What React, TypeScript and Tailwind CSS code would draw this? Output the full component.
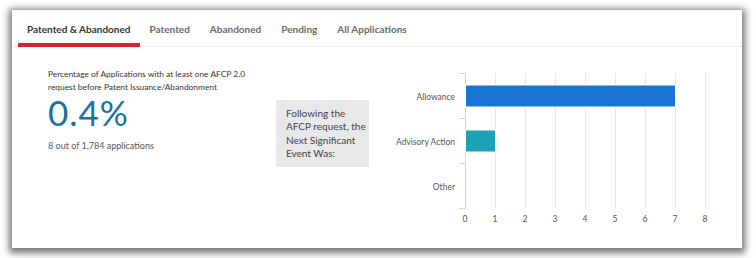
const TABS = ['Patented & Abandoned', 'Patented', 'Abandoned', 'Pending', 'All Applications']

const BARS = [
  { label: 'Allowance', value: 7, color: '#1976d2' },
  { label: 'Advisory Action', value: 1, color: '#1aa1b4' },
  { label: 'Other', value: 0, color: '#1976d2' },
]

// chart geometry (svg px)
const AXIS_X = 85
const TOP = 13
const ROW = 45
const UNIT = 30

function BarChart() {
  const bottom = TOP + ROW * BARS.length
  return (
    <svg width="340" height="170" className="block" style={{ fontFamily: 'Lato, sans-serif' }}>
      {/* gridlines */}
      {Array.from({ length: 9 }, (_, i) => (
        <line key={i} x1={AXIS_X + i * UNIT + 0.5} x2={AXIS_X + i * UNIT + 0.5} y1={TOP} y2={bottom} stroke="#e6e6e6" />
      ))}
      {/* axis + ticks */}
      <line x1={AXIS_X + 0.5} x2={AXIS_X + 0.5} y1={TOP} y2={bottom} stroke="#ccd6eb" />
      {Array.from({ length: BARS.length + 1 }, (_, i) => (
        <line key={i} x1={AXIS_X - 6} x2={AXIS_X} y1={TOP + i * ROW + 0.5} y2={TOP + i * ROW + 0.5} stroke="#ccd6eb" />
      ))}
      {BARS.map((b, i) => (
        <g key={b.label}>
          {b.value > 0 && (
            <rect x={AXIS_X + 0.5} y={TOP + i * ROW + 12} width={b.value * UNIT} height={22} fill={b.color} stroke="#fff" strokeWidth="1" />
          )}
          <text x={AXIS_X - 10} y={TOP + i * ROW + 26.5} textAnchor="end" fontSize="8.5" fill="#555">
            {b.label}
          </text>
        </g>
      ))}
      {Array.from({ length: 9 }, (_, i) => (
        <text key={i} x={AXIS_X + i * UNIT} y={162} textAnchor="middle" fontSize="8.5" fill="#555">
          {i}
        </text>
      ))}
    </svg>
  )
}

export default function App() {
  return (
    <div className="w-[756px] h-[258px] bg-white pt-[10px] pl-[12px] font-['Lato',sans-serif]">
      <div className="w-[730px] h-[238px] bg-white shadow-[0_2px_7px_3px_rgba(0,0,0,0.55)]">
        {/* Tabs */}
        <div className="flex h-[37px] pl-[6px] border-b border-[#efefef]">
          {TABS.map((tab, i) => (
            <div
              key={tab}
              className={
                i === 0
                  ? 'px-[9px] pt-[12px] h-[37px] -mb-px border-b-4 border-[#e4202a] text-[10px] font-bold text-[#333]'
                  : 'px-[10px] pt-[12px] text-[10px] font-bold text-[#6b6b6b]'
              }
            >
              {tab}
            </div>
          ))}
        </div>

        {/* Content */}
        <div className="flex items-start">
          <div className="ml-[36px] w-[228px] pt-[21px]">
            <p className="text-[8.4px] leading-[13px] text-[#333]">
              Percentage of Applications with at least one AFCP 2.0
              <br />
              request before Patent Issuance/Abandonment
            </p>
            <div className="mt-[1px] text-[35px] leading-[34px] tracking-[1px] font-normal text-[#1b6fa3]">0.4%</div>
            <p className="mt-[10px] text-[9px] leading-[13px] text-[#555]">
              <span className="text-[#2f6fb0]">8</span> out of 1,784 applications
            </p>
          </div>

          <div className="mt-[53px] w-[93px] h-[67px] bg-[#e8e8e8] pl-[10px] pt-[7px] text-[10px] leading-[13.3px] text-[#444]">
            Following the
            <br />
            AFCP request, the
            <br />
            Next Significant
            <br />
            Event Was:
          </div>

          <div className="ml-[11px] mt-[13px]">
            <BarChart />
          </div>
        </div>
      </div>
    </div>
  )
}
